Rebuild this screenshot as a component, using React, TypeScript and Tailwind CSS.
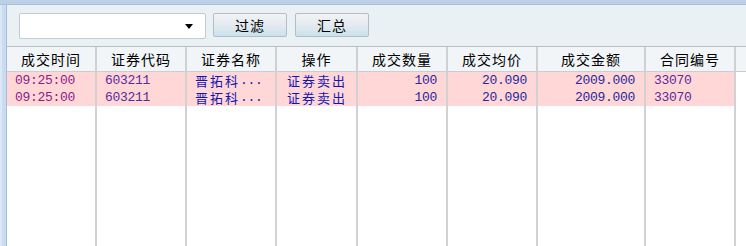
const cjk = { fontFamily: '"Noto Sans CJK SC", "Noto Sans", sans-serif' };
const mono = { fontFamily: '"Liberation Mono", "DejaVu Sans Mono", monospace' };

const columns = [
  { title: "成交时间", width: 90 },
  { title: "证券代码", width: 90 },
  { title: "证券名称", width: 90 },
  { title: "操作", width: 81 },
  { title: "成交数量", width: 90 },
  { title: "成交均价", width: 90 },
  { title: "成交金额", width: 108 },
  { title: "合同编号", width: 90 },
];

const trades = [
  { time: "09:25:00", code: "603211", name: "晋拓科", op: "证券卖出", qty: "100", price: "20.090", amount: "2009.000", id: "33070" },
  { time: "09:25:00", code: "603211", name: "晋拓科", op: "证券卖出", qty: "100", price: "20.090", amount: "2009.000", id: "33070" },
];

function NumCell({ children, color, align = "right" }: { children: string; color: string; align?: "left" | "right" }) {
  return (
    <div
      className={`flex items-center h-[17px] leading-none bg-[#ffd7d7] border-r-2 border-[#d2d2d2] text-[13px] tracking-[-0.3px] ${
        align === "right" ? "justify-end pr-[9px]" : "pl-[8px]"
      }`}
      style={{ ...mono, color }}
    >
      {children}
    </div>
  );
}

function TextCell({ children, pad = 8, ellipsis = false }: { children: string; pad?: number; ellipsis?: boolean }) {
  return (
    <div
      className={`flex items-center h-[17px] leading-none overflow-hidden bg-[#ffd7d7] border-r-2 border-[#d2d2d2] text-[13px] tracking-[2px] text-[#1414b4] ${
        pad === 10 ? "pl-[10px]" : "pl-[8px]"
      }`}
      style={cjk}
    >
      {children}
      {ellipsis && (
        <span className="text-[13px] tracking-[-0.3px]" style={mono}>
          ...
        </span>
      )}
    </div>
  );
}

export default function App() {
  return (
    <div className="w-[746px] h-[246px] flex flex-col bg-white overflow-hidden">
      <div className="h-[5px] bg-[#bcd0e8] border-b border-[#a9c0de]" />
      <div className="flex flex-1 min-h-0">
        <div className="w-[7px] bg-[#cadcf2] border-r border-[#a8bcd6] flex">
          <div className="w-[2px] h-full bg-[#dde8f6]" />
        </div>
        <div className="flex-1 flex flex-col min-w-0">
          <div className="h-[42px] bg-[#eaf1f5] flex items-start pt-[8px] pl-[12px] border-b border-[#b9bec2]">
            <div className="w-[187px] h-[26px] bg-white border border-[#c3cad1] rounded-[2px] flex items-center justify-end pr-[12px]">
              <div className="w-0 h-0 border-l-[4px] border-r-[4px] border-t-[5px] border-l-transparent border-r-transparent border-t-black" />
            </div>
            <button
              className="ml-[7px] w-[74px] h-[24px] rounded-[2px] border border-[#b4bcc4] bg-gradient-to-b from-[#f2f4f6] via-[#e4eaef] to-[#c9e2ee] text-[14px] tracking-[1px] text-black flex items-center justify-center"
              style={cjk}
            >
              过滤
            </button>
            <button
              className="ml-[8px] w-[74px] h-[24px] rounded-[2px] border border-[#b4bcc4] bg-gradient-to-b from-[#f2f4f6] via-[#e4eaef] to-[#c9e2ee] text-[14px] tracking-[1px] text-black flex items-center justify-center"
              style={cjk}
            >
              汇总
            </button>
          </div>
          <div
            className="flex-1 grid"
            style={{
              gridTemplateColumns: "90px 90px 90px 81px 90px 90px 108px 90px 1fr",
              gridTemplateRows: "25px 17px 17px 1fr",
            }}
          >
            {columns.map((c) => (
              <div
                key={c.title}
                className="flex items-center justify-center bg-[#f1f5f8] border-r-2 border-b border-r-[#d0d0d0] border-b-[#c9ced2] text-[14px] tracking-[1px] text-black"
                style={cjk}
              >
                {c.title}
              </div>
            ))}
            <div className="bg-[#f1f5f8] border-b border-[#c9ced2]" />

            {trades.map((t, i) => (
              <div key={i} className="contents">
                <NumCell color="#8a1c8a" align="left">{t.time}</NumCell>
                <NumCell color="#5b2a9c" align="left">{t.code}</NumCell>
                <TextCell ellipsis>{t.name}</TextCell>
                <TextCell pad={10}>{t.op}</TextCell>
                <NumCell color="#28289c">{t.qty}</NumCell>
                <NumCell color="#28289c">{t.price}</NumCell>
                <NumCell color="#28289c">{t.amount}</NumCell>
                <NumCell color="#5b2a9c" align="left">{t.id}</NumCell>
                <div className="bg-white" />
              </div>
            ))}

            {columns.map((c) => (
              <div key={c.title + "-fill"} className="border-r-2 border-[#d2d2d2]" />
            ))}
            <div />
          </div>
        </div>
      </div>
    </div>
  );
}
